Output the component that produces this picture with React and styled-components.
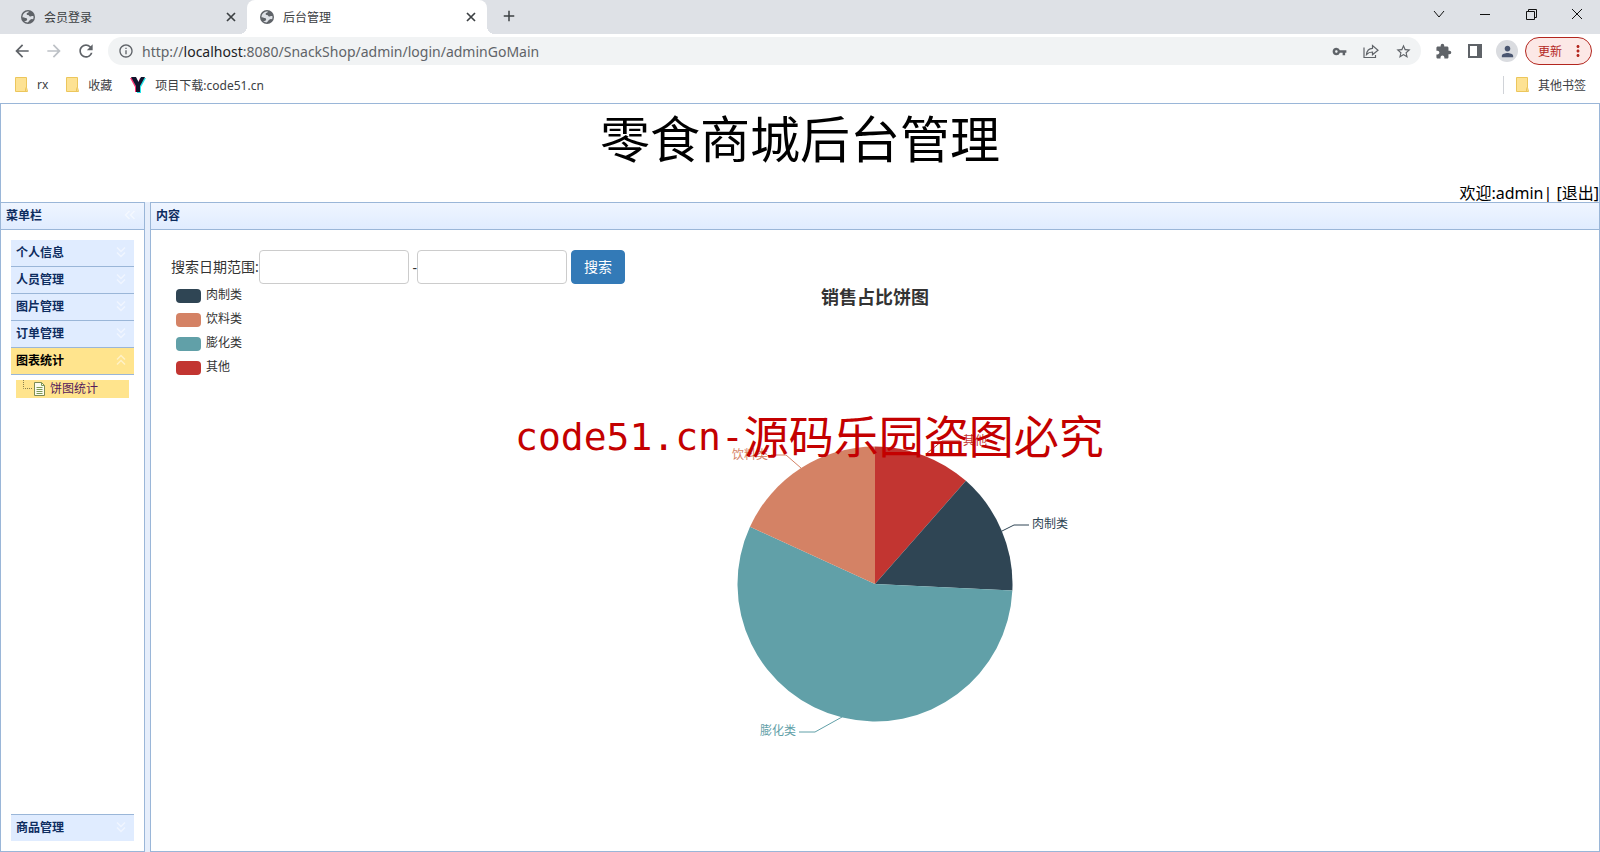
import React from 'react';
import styled, {createGlobalStyle} from 'styled-components';
import {
    MdArrowBack, MdArrowForward, MdRefresh, MdInfoOutline, MdVpnKey,
    MdStarBorder, MdExtension, MdPerson, MdAdd, MdMoreVert
} from 'react-icons/md';

const GlobalStyle = createGlobalStyle`
    * {
        box-sizing: border-box;
    }

    body {
        margin: 0;
        font-family: "Noto Sans", "Noto Sans CJK SC", sans-serif;
        font-size: 12px;
        color: #333;
        background: #fff;
    }

    button,
    input {
        font: inherit;
    }
`;

const Window = styled.div`
    position: relative;
    display: flex;
    flex-direction: column;
    height: 100vh;
    overflow: hidden;
`;

/* browser chrome */

const TabStrip = styled.div`
    display: flex;
    height: 34px;
    background: #dee1e6;
`;

const Tab = styled.div`
    position: relative;
    display: flex;
    align-items: center;
    gap: 9px;
    width: ${props => props.$active ? '240px' : '247px'};
    padding: 0 9px 0 ${props => props.$active ? '13px' : '21px'};
    border-radius: 8px 8px 0 0;
    color: #3c4043;
    background: ${props => props.$active ? '#fff' : 'transparent'};

    &::before,
    &::after {
        content: "";
        display: ${props => props.$active ? 'block' : 'none'};
        position: absolute;
        bottom: 0;
        width: 8px;
        height: 8px;
    }

    &::before {
        left: -8px;
        background: radial-gradient(circle at 0 0, transparent 8px, #fff 8px);
    }

    &::after {
        right: -8px;
        background: radial-gradient(circle at 100% 0, transparent 8px, #fff 8px);
    }
`;

const TabTitle = styled.span`
    flex: 1;
`;

const IconButton = styled.button`
    display: flex;
    align-items: center;
    justify-content: center;
    width: ${props => props.$size || 32}px;
    height: ${props => props.$size || 32}px;
    padding: 0;
    border: 0;
    color: ${props => props.$color || '#5f6368'};
    background: transparent;
`;

const NewTab = styled(IconButton)`
    margin: 0 auto 0 6px;
`;

const WindowButton = styled(IconButton)`
    width: 46px;
    height: 28px;
    color: #111;
`;

const Toolbar = styled.div`
    display: flex;
    align-items: center;
    height: 34px;
    padding: 0 8px 0 6px;
`;

const AddressBar = styled.div`
    display: flex;
    flex: 1;
    align-items: center;
    height: 28px;
    margin: 0 6px;
    padding: 0 2px 0 10px;
    border-radius: 14px;
    color: #5f6368;
    background: #f1f3f4;
`;

const Url = styled.div`
    flex: 1;
    margin-left: 8px;
    font-size: 14px;

    span {
        color: #202124;
    }
`;

const Avatar = styled.button`
    display: flex;
    align-items: center;
    justify-content: center;
    width: 22px;
    height: 22px;
    margin: 0 7px 0 5px;
    padding: 0;
    border: 0;
    border-radius: 50%;
    color: #4a5670;
    background: #dadce0;
`;

const UpdateButton = styled.button`
    display: flex;
    align-items: center;
    justify-content: space-between;
    width: 67px;
    height: 28px;
    padding: 0 4px 0 12px;
    border: 1px solid #b3261e;
    border-radius: 14px;
    color: #b3261e;
    background: #fce8e6;
`;

const Bookmarks = styled.nav`
    display: flex;
    align-items: center;
    height: 35px;
    padding: 0 14px 2px 15px;
`;

const Bookmark = styled.a`
    display: flex;
    align-items: center;
    gap: 9px;
    margin-right: 18px;
    color: #3c4043;
    text-decoration: none;

    &:last-child {
        margin: 0 0 0 auto;
        padding-left: 12px;
        border-left: 1px solid #d0d3d8;
    }
`;

/* admin page */

const Header = styled.header`
    display: flex;
    flex-direction: column;
    justify-content: space-between;
    height: 99px;
    border: 1px solid #9ab6d8;
    border-bottom: 0;
    color: #000;
`;

const SiteTitle = styled.h1`
    margin: 0;
    font-size: 50px;
    font-weight: 400;
    line-height: 70px;
    text-align: center;
`;

const Welcome = styled.div`
    font-size: 16px;
    line-height: 18px;
    text-align: right;

    a {
        color: #000;
        text-decoration: none;
    }
`;

const Main = styled.div`
    display: grid;
    grid-template-columns: 145px 1fr;
    column-gap: 5px;
    flex: 1;
    min-height: 0;
    background: #e6eefb;
`;

const Panel = styled.section`
    display: flex;
    flex-direction: column;
    min-width: 0;
    min-height: 0;
    border: 1px solid #9ab6d8;
    background: #fff;
`;

const PanelHeader = styled.div`
    display: flex;
    align-items: center;
    justify-content: space-between;
    height: 27px;
    padding: 0 8px 2px 5px;
    border-bottom: 1px solid #9ab6d8;
    color: #0e2d5f;
    background: linear-gradient(#eff5ff, #e0ecff);

    h2 {
        margin: 0;
        font-size: 12px;
    }
`;

const Accordion = styled.nav`
    display: flex;
    flex: 1;
    flex-direction: column;
    margin: 10px;
`;

const AccordionHeader = styled.button`
    display: flex;
    align-items: center;
    justify-content: space-between;
    width: 100%;
    height: 27px;
    padding: 0 7px 2px 5px;
    border: 0 solid #9ab6d8;
    border-width: ${props => props.$last ? '1px 0 0' : '0 0 1px'};
    color: ${props => props.$open ? '#000' : '#0e2d5f'};
    font-weight: 700;
    background: ${props => props.$open ? '#ffe48d' : '#e0ecff'};
`;

const AccordionBody = styled.div`
    flex: 1;
    padding: 5px;
`;

const TreeLink = styled.a`
    display: flex;
    align-items: center;
    gap: 3px;
    height: 18px;
    padding-left: 6px;
    color: #551a5b;
    line-height: 16px;
    text-decoration: none;
    background: #ffe48d;
`;

const Content = styled.div`
    flex: 1;
    min-height: 0;
    padding: 20px 20px 0;
    overflow: hidden;
`;

const SearchForm = styled.form`
    display: flex;
    align-items: center;
    height: 34px;
    font-size: 14px;
`;

const DateLabel = styled.label`
    width: 88px;
    padding-bottom: 2px;
    white-space: nowrap;
`;

const DateInput = styled.input`
    width: 150px;
    height: 34px;
    padding: 6px 12px;
    border: 1px solid #ccc;
    border-radius: 4px;
    background: #fff;
`;

const Dash = styled.span`
    width: 8px;
    text-align: right;
`;

const SearchButton = styled.button`
    height: 34px;
    margin-left: 4px;
    padding: 0 12px 2px;
    border: 1px solid #337ab7;
    border-radius: 4px;
    color: #fff;
    background: #337ab7;
`;

/* legend, title and pie share one grid cell */
const Chart = styled.figure`
    display: grid;
    margin: 0;

    > * {
        grid-area: 1 / 1;
    }
`;

const ChartTitle = styled.figcaption`
    justify-self: center;
    color: #333;
    font-size: 18px;
    font-weight: 700;
    line-height: 26px;
`;

const Legend = styled.ul`
    display: flex;
    flex-direction: column;
    gap: 10px;
    align-self: start;
    margin: 0;
    padding: 5px;
    list-style: none;
`;

const LegendItem = styled.li`
    display: flex;
    gap: 5px;
    height: 14px;
    line-height: 12px;

    &::before {
        content: "";
        width: 25px;
        height: 14px;
        border-radius: 4px;
        background: ${props => props.$color};
    }
`;

const Pie = styled.svg`
    justify-self: center;
    margin-top: 146px;
    font-size: 12px;
`;

const Watermark = styled.div`
    position: absolute;
    top: 400px;
    left: 515px;
    display: flex;
    align-items: center;
    color: #c40000;
    font-family: "Noto Sans CJK SC", sans-serif;
    font-size: 45px;
    line-height: 66px;
    white-space: nowrap;
    pointer-events: none;

    span {
        padding-top: 4px;
        font-family: "DejaVu Sans Mono", monospace;
        font-size: 38px;
    }
`;

const menus = ['个人信息', '人员管理', '图片管理', '订单管理'];

const legend = [
    {name: '肉制类', color: '#2f4554'},
    {name: '饮料类', color: '#d48265'},
    {name: '膨化类', color: '#61a0a8'},
    {name: '其他', color: '#c23531'}
];

// angles are in degrees, clockwise from twelve o'clock
const slices = [
    {name: '其他', color: '#c23531', from: 0, to: 41.4, line: '261,24 277,11 295,11', x: 298, y: 15},
    {name: '肉制类', color: '#2f4554', from: 41.4, to: 92.7, line: '337,101 349,95 364,95', x: 367, y: 98},
    {name: '膨化类', color: '#61a0a8', from: 92.7, to: 294.6, line: '177,287 150,302 134,302', x: 95, y: 305},
    {name: '饮料类', color: '#d48265', from: 294.6, to: 360, line: '136,38 121,25 106,25', x: 67, y: 29}
];

const CX = 210;
const CY = 154;
const R = 137.5;

const point = angle => {
    const rad = angle * Math.PI / 180;
    return `${CX + R * Math.sin(rad)} ${CY - R * Math.cos(rad)}`;
};

const slicePath = ({from, to}) => (
    `M${CX} ${CY}L${point(from)}A${R} ${R} 0 ${to - from > 180 ? 1 : 0} 1 ${point(to)}Z`
);

const Globe = () => (
    <svg width="14" height="14" viewBox="0 0 14 14">
        <circle cx="7" cy="7" r="7" fill="#5f6368" />
        <path d="M8 1.500C7.800 2.700 6 2.700 5.600 3.700c-.3.9.9 1.200 1.600 1.300 1 .1.8 1.500 1.900 1.600 1.200.1 1.500-1 3.400-.4.2 1.200 0 2.300-.5 3.300-.9-.9-2-.4-2.800.3-.8.8-1.200 1.700-2.600 2.600-1.300 0-2.500-.6-3.400-1.400 1.400.2 2.700-.2 2.900-1.300.2-1.200-.6-1.800-1.700-1.800C3.400 7.900 2.700 7.400 1.500 7.300 1.400 3.800 4.500 1 8 1.500z" fill="#dee1e6" />
    </svg>
);

const Cross = () => (
    <svg width="10" height="10" viewBox="0 0 10 10" fill="none" stroke="currentColor" strokeWidth="1.7">
        <path d="M1 1l8 8M9 1L1 9" />
    </svg>
);

const Folder = () => (
    <svg width="13" height="15" viewBox="0 0 13 15">
        <path d="M.5.5h11v10l1 4H.500z" fill="#fde293" stroke="#ecc65c" />
        <path d="M10.500 14.500v-3l1-1.500" fill="none" stroke="#ecc65c" />
    </svg>
);

const YLogo = () => (
    <svg width="16" height="16" viewBox="0 0 16 16">
        <path d="M0 1h5l3 5 2-5h5l-5 9v5H5v-5z" fill="#ff2d6f" />
        <path d="M2 1h4l3 5 2-5h5l-5 9v6H7v-5z" fill="#25e4ea" />
        <path d="M1 0h5l2.500 5L11 0h4l-5 9v6H6V9z" fill="#11122b" />
    </svg>
);

const Share = () => (
    <svg width="16" height="16" viewBox="0 0 16 16" fill="none" stroke="currentColor" strokeWidth="1.2">
        <path d="M1 4.500v10h11.500V12" />
        <path d="M3.500 11.500c.4-4 2.600-6 6-6.200V2.500l5.500 4.700-5.500 4.600V9c-2.600 0-4.500.8-6 2.500z" />
    </svg>
);

const SidePanel = () => (
    <svg width="14" height="14" viewBox="0 0 14 14">
        <path d="M1 1h12v12H1z" fill="#fff" stroke="#5f6368" strokeWidth="2" />
        <path d="M9 0h5v14H9z" fill="#5f6368" />
    </svg>
);

const Chevrons = ({up, left}) => (
    <svg width="12" height="12" viewBox="0 0 12 12" fill="none" stroke="#fff" strokeWidth="1.5" opacity=".5">
        {left && <path d="M5.500 2l-4 4 4 4M10.500 2l-4 4 4 4" />}
        {up && <path d="M2 5.500l4-4 4 4M2 10.500l4-4 4 4" />}
        {!left && !up && <path d="M2 1.500l4 4 4-4M2 6.500l4 4 4-4" />}
    </svg>
);

const TreeIcon = () => (
    <svg width="25" height="18" viewBox="0 0 25 18" fill="none">
        <path d="M1.500 0v8.500H10" stroke="#8b8050" strokeDasharray="1 1" />
        <path d="M12.500 2.500h7l3 3v10h-10z" fill="#fbfbef" stroke="#7c8a55" />
        <path d="M19.500 2.500v3h3M14.500 7.500h6M14.500 9.500h6M14.500 11.500h6M14.500 13.500h6" stroke="#7c9a55" />
    </svg>
);

const Browser = () => (
    <>
        <TabStrip>
            <Tab>
                <Globe />
                <TabTitle>会员登录</TabTitle>
                <IconButton $size={14} $color="#3c4043" aria-label="关闭"><Cross /></IconButton>
            </Tab>
            <Tab $active>
                <Globe />
                <TabTitle>后台管理</TabTitle>
                <IconButton $size={14} $color="#3c4043" aria-label="关闭"><Cross /></IconButton>
            </Tab>
            <NewTab $color="#3c4043" aria-label="新标签页"><MdAdd size={18} /></NewTab>
            <WindowButton aria-label="搜索标签页">
                <svg width="12" height="12" fill="none" stroke="currentColor"><path d="M1 3l5 6 5-6" /></svg>
            </WindowButton>
            <WindowButton aria-label="最小化">
                <svg width="10" height="10" fill="none" stroke="currentColor"><path d="M0 5.500h10" /></svg>
            </WindowButton>
            <WindowButton aria-label="还原">
                <svg width="11" height="11" fill="none" stroke="currentColor"><path d="M.5 2.500h8v8h-8zM2.500 2.500v-2h8v8h-2" /></svg>
            </WindowButton>
            <WindowButton aria-label="关闭窗口">
                <svg width="12" height="12" fill="none" stroke="currentColor"><path d="M1 1l10 10M11 1L1 11" /></svg>
            </WindowButton>
        </TabStrip>
        <Toolbar>
            <IconButton aria-label="后退"><MdArrowBack size={20} /></IconButton>
            <IconButton $color="#bdc1c6" aria-label="前进"><MdArrowForward size={20} /></IconButton>
            <IconButton aria-label="刷新"><MdRefresh size={20} /></IconButton>
            <AddressBar>
                <MdInfoOutline size={16} />
                <Url>http://<span>localhost</span>:8080/SnackShop/admin/login/adminGoMain</Url>
                <IconButton aria-label="密码"><MdVpnKey size={15} /></IconButton>
                <IconButton aria-label="分享"><Share /></IconButton>
                <IconButton aria-label="收藏"><MdStarBorder size={17} /></IconButton>
            </AddressBar>
            <IconButton aria-label="扩展程序"><MdExtension size={17} /></IconButton>
            <IconButton aria-label="侧边栏"><SidePanel /></IconButton>
            <Avatar aria-label="用户"><MdPerson size={17} /></Avatar>
            <UpdateButton>更新<MdMoreVert size={18} /></UpdateButton>
        </Toolbar>
        <Bookmarks>
            <Bookmark href="#rx"><Folder />rx</Bookmark>
            <Bookmark href="#fav"><Folder />收藏</Bookmark>
            <Bookmark href="#code51"><YLogo />项目下载:code51.cn</Bookmark>
            <Bookmark href="#other"><Folder />其他书签</Bookmark>
        </Bookmarks>
    </>
);

const Sidebar = () => (
    <Panel>
        <PanelHeader>
            <h2>菜单栏</h2>
            <Chevrons left />
        </PanelHeader>
        <Accordion>
            {menus.map(menu => (
                <AccordionHeader key={menu}>{menu}<Chevrons /></AccordionHeader>
            ))}
            <AccordionHeader $open>图表统计<Chevrons up /></AccordionHeader>
            <AccordionBody>
                <TreeLink href="#pie"><TreeIcon />饼图统计</TreeLink>
            </AccordionBody>
            <AccordionHeader $last>商品管理<Chevrons /></AccordionHeader>
        </Accordion>
    </Panel>
);

const SalesChart = () => (
    <Chart>
        <Legend>
            {legend.map(item => (
                <LegendItem key={item.name} $color={item.color}>{item.name}</LegendItem>
            ))}
        </Legend>
        <ChartTitle>销售占比饼图</ChartTitle>
        <Pie width="420" height="320" viewBox="0 0 420 320">
            {slices.map(slice => (
                <g key={slice.name}>
                    <path d={slicePath(slice)} fill={slice.color} />
                    <polyline points={slice.line} fill="none" stroke={slice.color} />
                    <text x={slice.x} y={slice.y} fill={slice.color}>{slice.name}</text>
                </g>
            ))}
        </Pie>
    </Chart>
);

const App = () => (
    <Window>
        <GlobalStyle />
        <Browser />
        <Header>
            <SiteTitle>零食商城后台管理</SiteTitle>
            <Welcome>欢迎:admin| <a href="#logout">[退出]</a></Welcome>
        </Header>
        <Main>
            <Sidebar />
            <Panel>
                <PanelHeader>
                    <h2>内容</h2>
                </PanelHeader>
                <Content>
                    <SearchForm>
                        <DateLabel htmlFor="start">搜索日期范围:</DateLabel>
                        <DateInput id="start" type="text" />
                        <Dash>-</Dash>
                        <DateInput id="end" type="text" aria-label="结束日期" />
                        <SearchButton type="button">搜索</SearchButton>
                    </SearchForm>
                    <SalesChart />
                </Content>
            </Panel>
        </Main>
        <Watermark><span>code51.cn-</span>源码乐园盗图必究</Watermark>
    </Window>
);

export default App;
